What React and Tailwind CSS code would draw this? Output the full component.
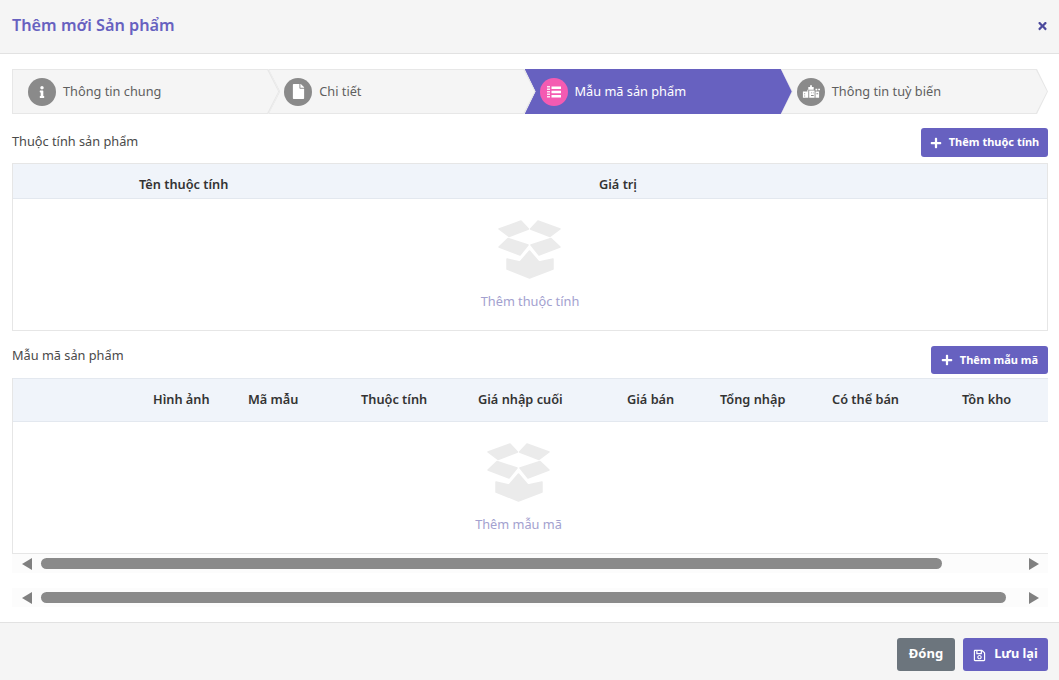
import React from "react";
import { FaInfo, FaFile, FaPlus, FaTimes, FaRegSave } from "react-icons/fa";

const font = { fontFamily: '"Noto Sans", sans-serif' };

function BuildingsIcon() {
  return (
    <svg viewBox="0 0 20 16" className="w-[18px] h-[15px]" fill="white">
      <path d="M7 3h2V1h2v2h2v3H7zM1 8h5V6h1v9H1zM8 7h6v8H8zM15 8h4v7h-4zM15 5h2v2h-2zM18 5h2v1.500h-2z" />
      <path d="M2.500 10h1v1h-1zM2.500 12.500h1v1h-1zM10 9h1v1h-1zM12 9h1v1h-1zM10 12h3v1h-3zM16 10h2v1h-2z" fill="#8a8a8a" />
    </svg>
  );
}

function ListIcon() {
  return (
    <svg viewBox="0 0 14 14" className="w-[14px] h-[14px]" fill="white">
      <path d="M0 1h3v1.500H0zM0 3.500h3V5H0zM0 6h3v1.500H0zM0 8.500h3V10H0zM0 11h3v1.500H0z" opacity="0.85" />
      <path d="M4.500 1.500H14V4H4.500zM4.500 5.750H14v2.500H4.500zM4.500 10H14v2.500H4.500z" />
    </svg>
  );
}

function BoxIcon({ className }) {
  return (
    <svg viewBox="0 0 63 59" className={className} fill="#ebebeb" stroke="#ebebeb" strokeWidth="1.5" strokeLinejoin="round">
      <path d="M1 9 L23 1 L30.500 9 L11 16.500 Z" />
      <path d="M32.500 9 L40 1 L62 9 L52 16.500 Z" />
      <path d="M1 27 L10 18.500 L30 25 L22 35 Z" />
      <path d="M62 27 L53 18.500 L33 25 L41 35 Z" />
      <path d="M9 39 L22 42 L31.500 31 L41 42 L55 39 L55 49 L31.500 58 L9 49 Z" />
    </svg>
  );
}

function Step({ icon, label, active, first, z }) {
  const clip = first
    ? "[clip-path:polygon(0_0,calc(100%-11px)_0,100%_50%,calc(100%-11px)_100%,0_100%)]"
    : "[clip-path:polygon(0_0,calc(100%-11px)_0,100%_50%,calc(100%-11px)_100%,0_100%,11px_50%)]";
  return (
    <div className={`relative flex-1 h-[45px] ${first ? "" : "-ml-[11px]"} ${z} ${clip} ${active ? "bg-[#6761c0]" : "bg-[#e7e7e7]"}`}>
      {!active && (
        <div className={`absolute inset-[1px] bg-[#f5f5f5] ${clip}`} />
      )}
      <div className={`relative flex items-center h-full gap-[7px] ${active ? "pl-[15px]" : "pl-[16px]"}`}>
        <span className={`flex items-center justify-center w-[28px] h-[28px] rounded-full text-white ${active ? "bg-[#f45bb2]" : "bg-[#8a8a8a]"}`}>
          {icon}
        </span>
        <span className={`text-[12.75px] ${active ? "text-white" : "text-[#5f5f5f]"}`}>{label}</span>
      </div>
    </div>
  );
}

function AddButton({ label, className }) {
  return (
    <button className={`flex items-center justify-center gap-[7px] bg-[#6761c0] text-white text-[11px] font-bold rounded-[3px] ${className}`}>
      <FaPlus className="w-[12px] h-[12px]" />
      <span>{label}</span>
    </button>
  );
}

function ScrollBar({ thumb }) {
  return (
    <div className="flex items-center justify-between h-[19px] pl-[10px] pr-[9px] bg-[#fcfcfc]">
      <div className="flex items-center gap-[9px]">
        <svg viewBox="0 0 10 12" className="w-[10px] h-[12px]" fill="#808080"><path d="M0 6 L10 0 V12 Z" /></svg>
        <div className={`h-[11px] rounded-full bg-[#8a8a8a] ${thumb}`} />
      </div>
      <svg viewBox="0 0 10 12" className="w-[10px] h-[12px]" fill="#808080"><path d="M10 6 L0 0 V12 Z" /></svg>
    </div>
  );
}

function App() {
  const variantCols = [
    ["Hình ảnh", "w-[95px]"],
    ["Mã mẫu", "w-[113px]"],
    ["Thuộc tính", "w-[117px]"],
    ["Giá nhập cuối", "w-[149px]"],
    ["Giá bán", "w-[93px]"],
    ["Tổng nhập", "w-[112px]"],
    ["Có thể bán", "w-[130px]"],
    ["Tồn kho", "w-[60px]"],
  ];

  return (
    <div className="flex flex-col h-[680px] w-[1059px] overflow-hidden bg-white" style={font}>
      {/* Header */}
      <header className="flex items-center justify-between h-[54px] shrink-0 pl-[12px] pr-[11px] pb-[2px] bg-[#f5f5f5] border-b border-[#e2e2e2]">
        <h1 className="text-[16.25px] font-semibold text-[#6761c0]">Thêm mới Sản phẩm</h1>
        <FaTimes className="w-[11px] h-[12px] text-[#4c4a9c]" />
      </header>

      {/* Body */}
      <main className="flex-1 pl-[12px] pr-[11px] pt-[15px]">
        <div className="flex">
          <Step first z="z-40" label="Thông tin chung" icon={<FaInfo className="w-[12px] h-[12px]" />} />
          <Step z="z-30" label="Chi tiết" icon={<FaFile className="w-[13px] h-[15px]" />} />
          <Step active z="z-20" label="Mẫu mã sản phẩm" icon={<ListIcon />} />
          <Step z="z-10" label="Thông tin tuỳ biến" icon={<BuildingsIcon />} />
        </div>

        <div className="flex items-center justify-between mt-[14px]">
          <span className="text-[12.75px] text-[#4a4a4a] -mt-[2px]">Thuộc tính sản phẩm</span>
          <AddButton label="Thêm thuộc tính" className="w-[127px] h-[29px]" />
        </div>

        <div className="mt-[6px] border border-[#e6e6e6]">
          <div className="flex items-center h-[35px] pl-[126px] pt-[7px] bg-[#f0f4fa] border-b border-[#e3e8ef] text-[12.75px] font-semibold text-[#333333]">
            <span className="w-[460px]">Tên thuộc tính</span>
            <span>Giá trị</span>
          </div>
          <div className="flex flex-col items-center h-[131px] pt-[21px]">
            <BoxIcon className="w-[63px] h-[59px] -ml-[2px]" />
            <span className="mt-[13px] text-[12.75px] text-[#a3a1cf]">Thêm thuộc tính</span>
          </div>
        </div>

        <div className="flex items-center justify-between mt-[15px]">
          <span className="text-[12.75px] text-[#4a4a4a] -mt-[9px]">Mẫu mã sản phẩm</span>
          <AddButton label="Thêm mẫu mã" className="w-[117px] h-[28px]" />
        </div>

        <div className="mt-[4px] border-l border-b border-[#e6e6e6]">
          <div className="flex items-center h-[44px] pl-[140px] bg-[#f0f4fa] border-y border-[#e3e8ef] text-[12.75px] font-semibold text-[#333333]">
            {variantCols.map(([name, width]) => (
              <span key={name} className={`${width} shrink-0`}>{name}</span>
            ))}
          </div>
          <div className="flex flex-col items-center h-[131px] pt-[21px] pr-[24px]">
            <BoxIcon className="w-[63px] h-[59px]" />
            <span className="mt-[13px] text-[12.75px] text-[#a3a1cf]">Thêm mẫu mã</span>
          </div>
        </div>

        <ScrollBar thumb="w-[901px]" />
        <div className="mt-[15px]">
          <ScrollBar thumb="w-[965px]" />
        </div>
      </main>

      {/* Footer */}
      <footer className="flex items-start justify-end gap-[8px] h-[58px] shrink-0 pt-[15px] pr-[11px] bg-[#f5f5f5] border-t border-[#e2e2e2]">
        <button className="w-[58px] h-[33px] pb-[2px] rounded-[3px] bg-[#6c757d] text-white text-[13px] font-bold">Đóng</button>
        <button className="flex items-center justify-center gap-[8px] w-[85px] h-[33px] pb-[2px] rounded-[3px] bg-[#6761c0] text-white text-[12.75px] font-bold">
          <FaRegSave className="w-[13px] h-[13px] mt-[3px]" />
          Lưu lại
        </button>
      </footer>
    </div>
  );
}

export default App;
